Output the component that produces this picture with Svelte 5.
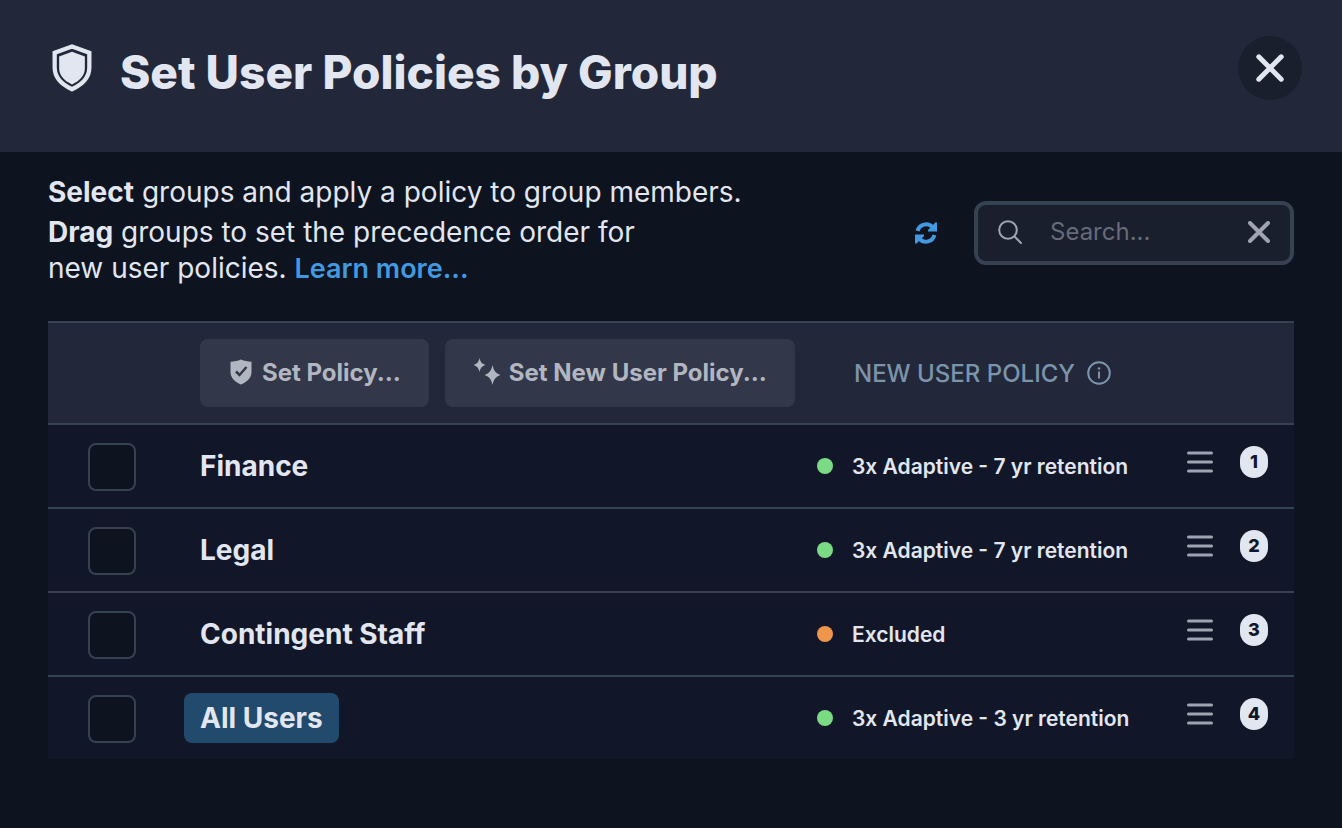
<script>
  let query = $state("");
  let groups = $state([
    { name: "Finance", policy: "3x Adaptive - 7 yr retention", checked: false },
    { name: "Legal", policy: "3x Adaptive - 7 yr retention", checked: false },
    { name: "Contingent Staff", policy: "Excluded", excluded: true, checked: false },
    { name: "All Users", policy: "3x Adaptive - 3 yr retention", everyone: true, checked: false },
  ]);
</script>

<header class="header">
  <svg class="shield" viewBox="0 0 42 50" aria-hidden="true">
    <path
      d="M21 2.5 39.2 9v15.5c0 10-6.700 17.500-18.200 22.800C9.500 42 2.800 34.500 2.800 24.500V9z"
      fill="none"
      stroke="currentColor"
      stroke-width="4.500"
    />
    <path d="M21 8 34.500 13v12c0 7.500-4.500 13-13.500 17.200C12 38 7.500 32.500 7.500 25V13z" fill="currentColor" />
  </svg>
  <h1>Set User Policies by Group</h1>
  <button class="close" aria-label="Close">
    <svg viewBox="0 0 28 28">
      <path d="M2.800 2.800l22.400 22.400M25.200 2.800L2.800 25.200" />
    </svg>
  </button>
</header>

<main>
  <div class="toolbar">
    <div class="intro">
      <p><strong>Select</strong> groups and apply a policy to group members.</p>
      <p>
        <strong>Drag</strong> groups to set the precedence order for<br />
        new user policies. <a href="#learn">Learn more...</a>
      </p>
    </div>
    <button class="refresh" aria-label="Refresh">
      <svg viewBox="0 0 24 24">
        <path d="M3.600 10A8.700 8.700 0 0 1 18.500 6.200" />
        <path d="M20.400 14A8.700 8.700 0 0 1 5.500 17.800" />
        <path class="head" d="M23 1.500v9h-9v-1.500l6-6 1-1.500z M1 22.500v-9h9v1.500l-6 6-1 1.500z" />
      </svg>
    </button>
    <div class="search">
      <svg class="lens" viewBox="0 0 24 24" aria-hidden="true">
        <circle cx="10" cy="10" r="8.800" />
        <path d="M16.500 16.500 23 23" />
      </svg>
      <input type="text" placeholder="Search..." aria-label="Search" bind:value={query} />
      <button class="clear" aria-label="Clear search" onclick={() => (query = "")}>
        <svg viewBox="0 0 22 22">
          <path d="M2 2l18 18M20 2L2 20" />
        </svg>
      </button>
    </div>
  </div>

  <table>
    <colgroup>
      <col class="col-check" />
      <col />
      <col class="col-policy" />
      <col class="col-order" />
    </colgroup>
    <thead>
      <tr>
        <td></td>
        <td>
          <div class="actions">
            <button class="action">
              <svg class="badge-icon" viewBox="0 0 22 26" aria-hidden="true">
                <path
                  d="M11 .500C14 2 18 2.600 21.500 2.700V13c0 6-4.500 9.800-10.500 12.500C5 22.800.500 19 .500 13V2.700C4 2.600 8 2 11 .500z"
                  fill="currentColor"
                />
                <path class="tick" d="M6 12.500l3.500 3.500 7-8" />
              </svg>
              Set Policy...
            </button>
            <button class="action">
              <svg class="sparkles" viewBox="0 0 28 28" aria-hidden="true">
                <path
                  d="M6.500 0c1 4 2 5.500 6 7-4 1.500-5 3-6 7-1-4-2-5.500-6-7 4-1.500 5-3 6-7z M19.500 7c1.300 6 3 8 8 10-5 2-6.700 4-8 10-1.300-6-3-8-8-10 5-2 6.700-4 8-10z"
                  fill="currentColor"
                />
              </svg>
              Set New User Policy...
            </button>
          </div>
        </td>
        <th colspan="2">
          <div class="heading">
            NEW USER POLICY
            <svg viewBox="0 0 24 24" aria-hidden="true">
              <circle cx="12" cy="12" r="10.800" />
              <path d="M12 10.500v7" />
              <circle class="point" cx="12" cy="7.500" r="1.300" />
            </svg>
          </div>
        </th>
      </tr>
    </thead>
    <tbody>
      {#each groups as group, i (group.name)}
        <tr draggable="true">
          <td class="check">
            <input type="checkbox" aria-label={"Select " + group.name} bind:checked={group.checked} />
          </td>
          <td><span class="name" class:everyone={group.everyone}>{group.name}</span></td>
          <td>
            <div class="policy">
              <span class="dot" class:excluded={group.excluded}></span>
              {group.policy}
            </div>
          </td>
          <td>
            <div class="order">
              <button class="handle" aria-label={"Move " + group.name}>
                <svg viewBox="0 0 26 22">
                  <path d="M1.500 2h23M1.500 11h23M1.500 20h23" />
                </svg>
              </button>
              <span class="rank">{i + 1}</span>
            </div>
          </td>
        </tr>
      {/each}
    </tbody>
  </table>
</main>

<style>
  :global(body) {
    margin: 0;
    background: #0d131f;
    color: #e2e6f0;
    font-family: Inter, "Liberation Sans", sans-serif;
  }
  button {
    padding: 0;
    border: 0;
    background: none;
    color: inherit;
    font: inherit;
    cursor: pointer;
  }
  svg {
    display: block;
    flex: none;
  }
  .header {
    display: flex;
    align-items: flex-start;
    gap: 28px;
    box-sizing: border-box;
    min-height: 152px;
    padding: 36px 40px 36px 52px;
    background: #22283a;
  }
  .shield {
    width: 40px;
    height: 48px;
    margin-top: 8px;
  }
  h1 {
    flex: 1;
    margin: 0;
    font-size: 46px;
    font-weight: 800;
    line-height: 72px;
  }
  .close {
    display: flex;
    align-items: center;
    justify-content: center;
    width: 64px;
    height: 64px;
    border-radius: 50%;
    background: #1a1f2d;
  }
  .close svg {
    width: 28px;
    height: 28px;
    fill: none;
    stroke: currentColor;
    stroke-width: 5;
    stroke-linecap: round;
  }
  main {
    padding: 22px 48px;
  }
  .toolbar {
    display: flex;
    align-items: center;
    margin-bottom: 30px;
  }
  .intro {
    flex: 1;
    padding-bottom: 4px;
    font-size: 28px;
    line-height: 36px;
  }
  .intro p {
    margin: 0;
  }
  .intro p + p {
    margin-top: 4px;
  }
  .intro a {
    color: #4299e1;
    font-size: 27px;
    font-weight: 600;
    text-decoration: none;
  }
  .refresh {
    margin-right: 36px;
    color: #4299e1;
  }
  .refresh svg {
    width: 24px;
    height: 24px;
    fill: none;
    stroke: currentColor;
    stroke-width: 4;
  }
  .refresh .head {
    fill: currentColor;
    stroke: none;
  }
  .search {
    display: flex;
    align-items: center;
    box-sizing: border-box;
    width: 320px;
    height: 64px;
    padding: 0 20px 2px;
    border: 4px solid #364252;
    border-radius: 12px;
    background: #1a1f2d;
    color: #a0a3b1;
  }
  .search svg {
    fill: none;
    stroke: currentColor;
    stroke-linecap: round;
  }
  .lens {
    width: 24px;
    height: 24px;
    stroke-width: 2;
  }
  .search input {
    flex: 1;
    min-width: 0;
    padding: 0 28px;
    border: 0;
    outline: 0;
    background: none;
    color: #e2e6f0;
    font: 24px Inter, "Liberation Sans", sans-serif;
  }
  .search input::placeholder {
    color: #666a79;
    opacity: 1;
  }
  .clear svg {
    width: 22px;
    height: 22px;
    stroke-width: 4;
  }
  table {
    width: 100%;
    table-layout: fixed;
    border-spacing: 0;
    background: #111729;
  }
  .col-check {
    width: 136px;
  }
  .col-policy {
    width: 346px;
  }
  .col-order {
    width: 132px;
  }
  td,
  th {
    box-sizing: border-box;
    height: 84px;
    padding: 0;
    border-bottom: 2px solid #364252;
    text-align: left;
  }
  tbody tr:last-child td {
    height: 82px;
    border-bottom: 0;
  }
  thead td,
  th {
    height: 104px;
    border-top: 2px solid #364252;
    background: #22283a;
  }
  .actions {
    display: flex;
    gap: 16px;
    padding-left: 16px;
  }
  .action {
    display: flex;
    align-items: center;
    gap: 8px;
    height: 68px;
    padding: 0 28px 2px;
    border-radius: 8px;
    background: #32384a;
    color: #b2b6c0;
    font-size: 24px;
    font-weight: 700;
    white-space: nowrap;
  }
  .badge-icon {
    width: 26px;
    height: 26px;
  }
  .tick {
    fill: none;
    stroke: #32384a;
    stroke-width: 2.500;
  }
  .sparkles {
    width: 28px;
    height: 28px;
  }
  .heading {
    display: flex;
    align-items: center;
    gap: 12px;
    padding-left: 38px;
    color: #7c94ab;
    font-size: 24px;
    font-weight: 500;
  }
  .heading svg {
    width: 24px;
    height: 24px;
    fill: none;
    stroke: currentColor;
    stroke-width: 2;
  }
  .heading .point {
    fill: currentColor;
    stroke: none;
  }
  .check {
    padding-top: 2px;
  }
  .check input {
    display: block;
    appearance: none;
    width: 48px;
    height: 48px;
    margin: 0 0 0 40px;
    border: 2px solid #364252;
    border-radius: 8px;
    background: #0d131f;
  }
  .check input:checked {
    background: #4299e1;
  }
  .name {
    display: inline-block;
    padding: 0 16px;
    border-radius: 8px;
    font-size: 28px;
    font-weight: 700;
    line-height: 50px;
  }
  .everyone {
    background: #224a6c;
  }
  .policy {
    display: flex;
    align-items: center;
    gap: 19px;
    padding-left: 1px;
    font-size: 21px;
    font-weight: 600;
    white-space: nowrap;
  }
  .dot {
    width: 16px;
    height: 16px;
    border-radius: 50%;
    background: #7adb84;
  }
  .excluded {
    background: #f0964b;
  }
  .order {
    display: flex;
    align-items: center;
    justify-content: flex-end;
    gap: 27px;
    padding: 0 26px 8px 0;
  }
  .handle {
    color: #a0a3b1;
    cursor: grab;
  }
  .handle svg {
    width: 26px;
    height: 22px;
    stroke: currentColor;
    stroke-width: 3;
    stroke-linecap: round;
  }
  .rank {
    width: 28px;
    border-radius: 14px;
    background: #e2e6f0;
    color: #111729;
    font-size: 18px;
    font-weight: 800;
    line-height: 32px;
    text-align: center;
  }
</style>
